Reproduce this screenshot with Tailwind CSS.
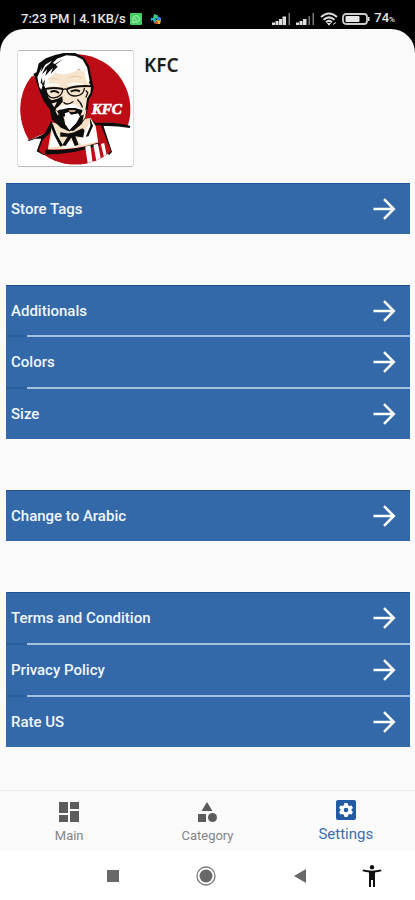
<!DOCTYPE html>
<html lang="en">
<head>
<meta charset="utf-8">
<meta name="viewport" content="width=device-width, initial-scale=1">
<title>KFC – Settings</title>
<script src="https://cdn.jsdelivr.net/npm/@tailwindcss/browser@4"></script>
</head>
<body class="flex min-h-screen flex-col bg-black font-['Roboto',sans-serif]">
<svg class="hidden" aria-hidden="true">
  <symbol id="arrow" viewBox="0 0 24 24"><path d="M1.500 12H21M12 2.200L21.800 12L12 21.800" fill="none" stroke="currentColor" stroke-width="2.500"/></symbol>
</svg>

<!-- Status bar -->
<header class="flex h-[29px] items-center justify-between pt-2 pr-5 pl-[21px] text-[13px] leading-4 font-medium text-[#e4e4e4]">
  <div class="flex items-center gap-1">
    <span>7:23 PM | 4.1KB/s</span>
    <svg class="h-3 w-3" viewBox="0 0 12 12" aria-hidden="true"><rect width="12" height="12" rx="1" fill="#45cf62"/><path d="M2.500 9.500L3.200 7.500A3.300 3.300 0 1 1 4.700 9Z" fill="none" stroke="#b5f0bd"/><path d="M4.500 4.500Q5 7 7.500 7.500" fill="none" stroke="#b5f0bd"/></svg>
    <svg class="ml-1 h-3 w-3" viewBox="0 0 12 12" aria-hidden="true"><path d="M4 1L8 2.500L8 6L3 5Z" fill="#36cf78"/><path d="M1 5H5L7 8L4 10L3 7L1 8Z" fill="#21b7dc"/><path d="M7 3L11 5L11 8L7 7Z" fill="#3488ed"/><path d="M6 7L11 7.500L10 11L8 11Z" fill="#f5b52e"/><path d="M5 8.500L8 9L8 11L4 10.500Z" fill="#ec5645"/></svg>
  </div>
  <div class="flex items-center">
    <svg class="mr-1 h-3 w-5" viewBox="0 0 20 12" fill="#ddd" aria-hidden="true"><path d="M0 9.500h3V12H0zM3.500 8h3v4h-3zM7 6h3v6H7zM10.500 3.500H14V12h-3.500z"/><path d="M16.500 0H18v12h-1.500z" fill="#777"/></svg>
    <svg class="mr-1 h-3 w-5" viewBox="0 0 20 12" fill="#ddd" aria-hidden="true"><path d="M0 9.500h3V12H0zM3.500 8h3v4h-3zM7 6h3.500v6H7z"/><path d="M12.500 3H14v9h-1.500zM16.500 0H18v12h-1.500z" fill="#777"/></svg>
    <svg class="mr-1 h-[14px] w-[18px]" viewBox="0 0 18 14" fill="none" stroke="#ddd" stroke-width="2" aria-hidden="true"><path d="M1 5Q9-2 17 5M3.500 7.700Q9 3 14.500 7.700M6 10.200Q9 7.500 12 10.200"/><path d="M7.500 11.500h3L9 13.200zM13 12.500l3-2" fill="#ddd" stroke-width="1"/></svg>
    <svg class="mr-1 h-3 w-7" viewBox="0 0 28 12" aria-hidden="true"><rect x="1" y="1" width="24" height="10" rx="3" fill="none" stroke="#ccc" stroke-width="1.800"/><rect x="3.500" y="3" width="14" height="6" rx="1" fill="#e6e6e6"/><path d="M26 4h1.500v4H26z" fill="#ddd"/></svg>
    <span>74<span class="text-[8px]">%</span></span>
  </div>
</header>

<main class="flex flex-1 flex-col rounded-t-[24px] bg-[#fafafa]">
  <section class="flex gap-[10px] px-[17px] pt-[21px]">
    <svg class="h-[117px] w-[117px] shrink-0 rounded-[3px] border-x border-y border-[#b9b9b9] border-x-[#dcdcdc] bg-white" viewBox="9 12 351 351" role="img" aria-label="KFC logo">
      <defs><clipPath id="disc"><circle cx="184" cy="190" r="168"/></clipPath></defs>
      <circle cx="184" cy="190" r="168" fill="#bd0c16"/>
      <path d="M9 12H150L100 34L72 66L62 92L50 90L20 130Z" fill="#fff"/>
      <path d="M17 190Q18 128 56 86L82 130L90 160L110 200L112 235L92 266L42 284Q17 240 17 190Z" fill="#bd0c16"/>
      <!-- Jacket -->
      <path d="M20 292L44 284Q76 268 96 262L90 300L76 324L66 340Z" fill="#fff"/>
      <path d="M258 232Q310 226 352 246L360 260L296 324L280 300Z" fill="#fff"/>
      <path d="M42 284Q76 272 92 262L110 226L122 238L106 262L96 300L88 330L66 318L80 280L62 280L38 288Z" fill="#0d0d0d"/>
      <path d="M226 214L246 232Q306 226 352 241L350 247Q310 240 270 241L296 320L286 330L256 250L220 226Z" fill="#0d0d0d"/>
      <!-- Apron -->
      <g clip-path="url(#disc)">
        <path d="M84 284L106 262L96 316Q180 318 256 293L244 240L262 238L292 316L290 363H84L70 322Z" fill="#bd0c16"/>
        <path d="M94 313Q176 318 256 292L259 299Q180 328 90 328Z" fill="#0d0d0d"/>
        <path d="M214 304L230 300L238 363H223ZM239 298L253 295L266 363H251ZM262 296L272 293L284 350L276 356Z" fill="#fff"/>
      </g>
      <!-- Shirt -->
      <path d="M114 230L150 240L210 220L230 216L246 240L254 291Q180 316 100 312Z" fill="#f5e0c4"/>
      <path d="M118 236L134 276L142 302L104 307ZM232 222L246 248L252 288L204 299L190 282L212 262Z" fill="#fff"/>
      <path d="M150 300L164 282L184 298L186 304L146 309Z" fill="#fff"/>
      <path d="M115 234L128 268L146 300L138 304L120 270L108 240ZM228 216L230 240L216 274L224 272L238 240Z" fill="#0d0d0d"/>
      <!-- Head outline -->
      <path d="M62 96L56 82L66 76L72 50L94 34L122 24L148 18H184L210 32L226 58L234 98L240 124L234 148L226 158L222 190L212 222L194 242L166 258L140 246L112 220L106 190L88 166L76 138Z" fill="#0d0d0d"/>
      <!-- Face -->
      <path d="M102 84L204 66L218 92L232 120L230 140L220 156L214 196L202 222L176 240L150 236L134 212L122 190L104 160L94 132Z" fill="#f7e4cc"/>
      <!-- Hair -->
      <path d="M74 122L68 92L82 60L78 78L92 54L112 42L100 64L128 36L156 25L184 27L206 38L220 62L228 104L220 110L210 78L196 66L176 78L150 84L124 80L106 92L100 120L94 128L86 112L80 130Z" fill="#fff"/>
      <path d="M110 46L92 62L82 84L98 68L92 88L116 62L108 82L130 60L124 54L148 36L122 52ZM82 92L84 112L92 98L88 122L78 108Z" fill="#0d0d0d"/>
      <path d="M100 98Q112 92 130 98M160 94Q186 84 204 94" fill="none" stroke="#e4c9a8" stroke-width="3"/>
      <path d="M96 120Q112 108 136 118M160 117Q184 106 208 116" fill="none" stroke="#fff" stroke-width="6"/>
      <!-- Glasses and eyes -->
      <g fill="none" stroke="#0d0d0d">
        <path d="M84 130Q112 121 146 128M158 128Q188 116 238 120" stroke-width="6"/>
        <path d="M94 130Q98 156 118 155Q142 154 146 130M158 130Q164 152 188 149Q210 146 212 124M146 130Q152 125 158 130" stroke-width="4"/>
        <path d="M108 138Q120 130 134 140M170 136Q184 128 198 135" stroke-width="6"/>
      </g>
      <!-- Left cheek shadow -->
      <path d="M84 136L96 150L112 162L130 158L144 150L146 166L134 180L124 188L132 206L148 214L154 238L138 238L114 214L108 186L90 160Z" fill="#0d0d0d"/>
      <path d="M112 172L128 168L120 184ZM122 192L132 198L130 210Z" fill="#f7e4cc"/>
      <path d="M148 168Q154 176 166 173L178 166M190 160Q202 170 206 184M216 132L222 140L216 154" fill="none" stroke="#0d0d0d" stroke-width="4"/>
      <!-- Moustache and beard -->
      <path d="M128 196Q146 182 164 184L194 182L206 194L198 212L184 204L160 208L140 216Z" fill="#0d0d0d"/>
      <path d="M128 192Q138 174 158 177L170 174Q192 174 204 192L184 186L162 186L146 190Z" fill="#fff"/>
      <path d="M164 192H186L182 198H166Z" fill="#c8a588"/>
      <path d="M152 202L164 198L172 208L192 202L198 212L184 234L166 254L154 236Z" fill="#fff"/>
      <path d="M200 208L186 234L166 254L178 256L204 234L214 208Z" fill="#0d0d0d"/>
      <path d="M212 196L218 190L214 214L206 226Z" fill="#f7e4cc"/>
      <!-- Ribbon tie -->
      <path d="M138 260L162 264L178 261L206 248L212 254L208 276L184 272L194 298L182 302L172 276L154 302L144 300L160 274L138 274Z" fill="#0d0d0d"/>
      <text x="234" y="203" fill="#fff" stroke="#fff" stroke-width="2" font-family="Liberation Serif, serif" font-size="46" font-weight="700" font-style="italic">KFC</text>
    </svg>
    <h1 class="pt-px font-['Noto_Sans',sans-serif] text-[19px] leading-7 font-semibold text-[#1c1c1c]">KFC</h1>
  </section>

  <nav aria-label="Settings" class="flex flex-col gap-[51px] pt-4 pr-[5px] pb-10 pl-[6px] text-[15px] leading-5 font-medium text-[#f1f6fb] [&_a]:flex [&_a]:h-[50px] [&_a]:items-center [&_a]:justify-between [&_a]:bg-[#3369a9] [&_a]:pr-[14px] [&_a]:pl-[5px] [&_svg]:h-6 [&_svg]:w-6 [&_svg]:text-white">
    <ul class="border-t border-[#205394]">
      <li><a href="#tags">Store Tags<svg aria-hidden="true"><use href="#arrow"/></svg></a></li>
    </ul>
    <ul>
      <li><a href="#additionals" class="border-t border-[#205394]">Additionals<svg aria-hidden="true"><use href="#arrow"/></svg></a></li>
      <li class="bg-[#2b609f]"><div class="ml-[21px] h-[2px] bg-[#a4c1e0]"></div><a href="#colors">Colors<svg aria-hidden="true"><use href="#arrow"/></svg></a></li>
      <li class="bg-[#2b609f]"><div class="ml-[21px] h-[2px] bg-[#a4c1e0]"></div><a href="#size">Size<svg aria-hidden="true"><use href="#arrow"/></svg></a></li>
    </ul>
    <ul class="border-t border-[#205394]">
      <li><a href="#arabic">Change to Arabic<svg aria-hidden="true"><use href="#arrow"/></svg></a></li>
    </ul>
    <ul class="border-t border-[#205394]">
      <li><a href="#terms">Terms and Condition<svg aria-hidden="true"><use href="#arrow"/></svg></a></li>
      <li class="bg-[#2b609f]"><div class="ml-[21px] h-[2px] bg-[#a4c1e0]"></div><a href="#privacy">Privacy Policy<svg aria-hidden="true"><use href="#arrow"/></svg></a></li>
      <li class="bg-[#2b609f]"><div class="ml-[21px] h-[2px] bg-[#a4c1e0]"></div><a href="#rate">Rate US<svg aria-hidden="true"><use href="#arrow"/></svg></a></li>
    </ul>
  </nav>

  <!-- Tab bar -->
  <nav aria-label="Tabs" class="mt-auto grid h-[61px] grid-cols-3 border-t border-[#ececec] text-[13px] leading-4 text-[#858585]">
    <a href="#main" class="flex flex-col items-center gap-[6px] pt-[11px]">
      <svg class="h-5 w-5" viewBox="0 0 20 20" fill="#5c5c5c" aria-hidden="true"><path d="M0 0h9v11H0zM11 0h9v7h-9zM0 13h9v7H0zM11 9h9v11h-9z"/></svg>
      Main
    </a>
    <a href="#category" class="flex flex-col items-center gap-[6px] pt-[11px]">
      <svg class="h-5 w-5" viewBox="0 0 20 20" fill="#5c5c5c" aria-hidden="true"><path d="M10 0l5.500 9h-11zM1 12h8v8H1z"/><circle cx="15.500" cy="15.500" r="4.500"/></svg>
      Category
    </a>
    <a href="#settings" aria-current="page" class="flex flex-col items-center gap-1 pt-[9px] text-[15px] leading-5 text-[#3b6fae]">
      <svg class="h-5 w-5" viewBox="0 0 20 20" aria-hidden="true"><rect width="20" height="20" rx="2" fill="#205ba3"/><path d="M8.500 3h3l.5 2 1.500 1 2-.6L17 8l-1.400 1.300v1.400L17 12l-1.500 2.600-2-.6-1.500 1-.5 2h-3L8 15l-1.500-1-2 .6L3 12l1.400-1.300V9.300L3 8l1.500-2.600 2 .6L8 5z" fill="#fff"/><circle cx="10" cy="10" r="2.300" fill="#205ba3"/></svg>
      Settings
    </a>
  </nav>
</main>

<!-- System navigation -->
<footer class="grid h-[49px] grid-cols-[93fr_93fr_93fr_52fr] place-items-center bg-white pr-[4%] pl-[16%]">
  <button type="button" aria-label="Recent apps"><svg class="h-3 w-3" viewBox="0 0 12 12" aria-hidden="true"><path d="M0 0h12v12H0z" fill="#686868"/></svg></button>
  <button type="button" aria-label="Home"><svg class="h-5 w-5" viewBox="0 0 20 20" aria-hidden="true"><circle cx="10" cy="10" r="9" fill="none" stroke="#777" stroke-width="1.300"/><circle cx="10" cy="10" r="6.500" fill="#686868"/></svg></button>
  <button type="button" aria-label="Back"><svg class="h-4 w-3" viewBox="0 0 12 16" aria-hidden="true"><path d="M12 1v14L0 8z" fill="#686868"/></svg></button>
  <button type="button" aria-label="Accessibility"><svg class="h-[22px] w-5" viewBox="0 0 20 22" fill="#111" aria-hidden="true"><circle cx="10" cy="2.200" r="2.200"/><path d="M1 4.500Q10 6.800 19 4.500L19.500 6.300L13 7.500V22H11V15H9V22H7V7.500L.5 6.300Z"/></svg></button>
</footer>
</body>
</html>
